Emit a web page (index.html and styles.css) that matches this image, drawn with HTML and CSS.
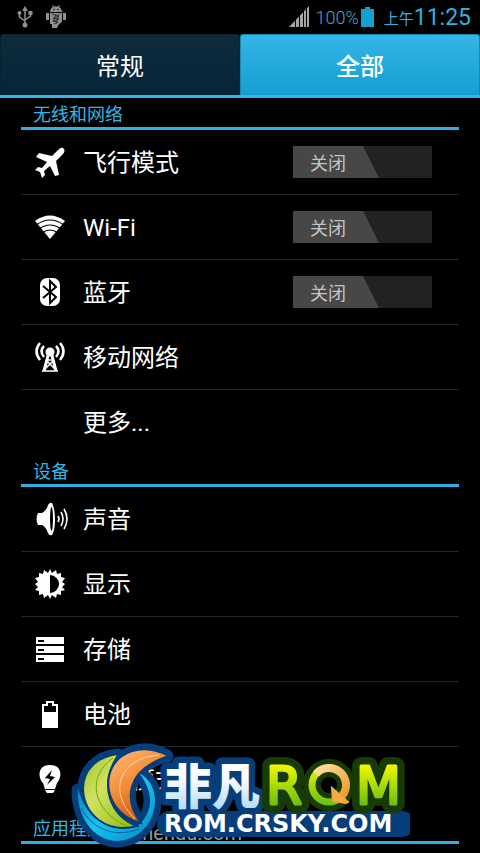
FILE: index.html
```html
<!DOCTYPE html>
<html lang="zh-CN">
<head>
<meta charset="utf-8">
<meta name="viewport" content="width=device-width, initial-scale=1">
<title>设置</title>
<link rel="stylesheet" href="styles.css">
</head>
<body>
<div class="screen">
  <header class="status">
    <div class="status-left">
      <svg class="s-icon" width="16" height="22" viewBox="0 0 16 22" aria-hidden="true"><g fill="none" stroke="#8f8f8f" stroke-width="1.5"><path d="M8 4V18M2.500 7V11L8 15M13.500 7V10L8 14"/></g><g fill="#8f8f8f"><path d="M8 0L11 5H5Z"/><circle cx="8" cy="19" r="2.500"/><circle cx="2.500" cy="7" r="2"/><path d="M11.500 5h4v4h-4z"/></g></svg>
      <svg class="s-icon" width="20" height="24" viewBox="0 0 20 24" aria-hidden="true"><path fill="#8f8f8f" d="M4 7C4 4 6 2.500 7 2L6 0.500L7 0L8 1.500Q10 1 12 1.500L13 0L14 .5L13 2C15 3 16 5 16 7ZM0 8h3v7H0zM17 8h3v7h-3zM4 8h12v9l-3 2-2 4H6v-4H4z"/><g fill="#151515"><circle cx="8" cy="4.500" r=".8"/><circle cx="12" cy="4.500" r=".8"/></g><path d="M6 9l7 2-6 2 6 1-6 2 5 1-4 2M10 9l-3 8M13 9l-3 10" stroke="#303030" fill="none"/></svg>
    </div>
    <div class="status-right">
      <svg width="20" height="22" viewBox="0 0 20 22" aria-hidden="true"><path fill="#a5a5a5" d="M0 21L20 0V21Z"/><path stroke="#000" d="M6.500 0V22M10.500 0V22M14.500 0V22M17.500 0V22" fill="none"/></svg>
      <span class="percent">100%</span>
      <svg class="batt" width="13" height="20" viewBox="0 0 13 20" aria-hidden="true"><path fill="#139fd0" d="M4 0h5v2h4v18H0V2h4z"/></svg>
      <span class="ampm">上午</span><time class="time">11:25</time>
    </div>
  </header>

  <nav class="tabs">
    <button class="tab" type="button">常规</button>
    <button class="tab tab-active" type="button">全部</button>
  </nav>

  <main class="settings">
    <section>
      <h2 class="heading">无线和网络</h2>
      <div class="row">
        <svg class="icon" viewBox="0 0 34 34" aria-hidden="true"><path fill="#fff" d="M30 3Q33 5 30 9L23 16L26 30L22 31L17 21L11 26L12 30L9 33L7 27L2 25L5 22L9 23L14 17L3 12L6 8L19 11L25 5Q28 2 30 3Z"/></svg>
        <label class="name" for="air">飞行模式</label>
        <span class="switch"><input id="air" type="checkbox" role="switch"><span class="thumb">关闭</span></span>
      </div>
      <div class="row">
        <svg class="icon" viewBox="0 0 34 34" aria-hidden="true"><path fill="#fff" d="M2 11Q17 0 32 11L17 29Z"/><path d="M3 15Q17 5 31 15M6 19Q17 11 28 19M9 23Q17 17 25 23" fill="none" stroke="#000" stroke-width="1.200"/></svg>
        <label class="name" for="wifi">Wi-Fi</label>
        <span class="switch"><input id="wifi" type="checkbox" role="switch"><span class="thumb">关闭</span></span>
      </div>
      <div class="row">
        <svg class="icon" viewBox="0 0 34 34" aria-hidden="true"><rect x="7" y="3" width="20" height="28" rx="7" fill="#fff"/><path d="M10 11L23 22L17 28V6L23 12L10 23" fill="none" stroke="#000" stroke-width="2"/></svg>
        <label class="name" for="bt">蓝牙</label>
        <span class="switch"><input id="bt" type="checkbox" role="switch"><span class="thumb">关闭</span></span>
      </div>
      <a class="row" href="#mobile">
        <svg class="icon" viewBox="0 0 34 34" aria-hidden="true"><g fill="none" stroke="#fff" stroke-width="2.500"><path d="M7 3Q0 11 7 20M11 6Q6 11 11 17M27 3Q34 11 27 20M23 6Q28 11 23 17"/><path d="M16 12L11 31M18 12L23 31" stroke-width="3"/><path d="M13 20L22 29M21 20L12 29M13 20H21M9 31H25" stroke-width="1.500"/></g><circle cx="17" cy="12" r="4.500" fill="#fff"/></svg>
        <span class="name">移动网络</span>
      </a>
      <a class="row" href="#more"><span class="icon"></span><span class="name">更多...</span></a>
    </section>

    <section>
      <h2 class="heading">设备</h2>
      <a class="row" href="#sound">
        <svg class="icon" viewBox="0 0 34 34" aria-hidden="true"><path fill="#fff" d="M5 11H9Q14 8 15 3Q17 0 19 1C23 8 23 27 19 33Q16 34 15 31Q13 25 9 23H5Q2 17 5 11Z"/><ellipse cx="18.500" cy="17" rx="1.500" ry="12" fill="#000"/><path d="M25 14Q27 17 25 20M28 10Q32 17 28 24M31 7Q37 17 31 27" fill="none" stroke="#fff" stroke-width="1.600"/></svg>
        <span class="name">声音</span>
      </a>
      <a class="row" href="#display">
        <svg class="icon" viewBox="0 0 34 34" aria-hidden="true"><path fill="#fff" d="M17 2L19 6L23 3L24 7L28 6L28 10L32 11L29 15L32 17L29 20L32 23L28 24L28 28L24 27L23 31L19 28L17 32L15 28L11 31L10 27L6 28L6 24L2 23L5 20L2 17L5 15L2 11L6 10L6 6L10 7L11 3L15 6Z"/><path d="M17 8A9 9 0 0 1 17 26Z"/></svg>
        <span class="name">显示</span>
      </a>
      <a class="row" href="#storage">
        <svg class="icon" viewBox="0 0 34 34" aria-hidden="true"><path fill="#fff" d="M3 5h28v7H3zM3 14h28v7H3zM3 23h28v7H3z"/><path d="M5 8h6v2H5zM5 17h6v2H5zM5 26h6v2H5z"/></svg>
        <span class="name">存储</span>
      </a>
      <a class="row" href="#battery">
        <svg class="icon" viewBox="0 0 34 34" aria-hidden="true"><path fill="#fff" d="M13 4h8v3h4v24H9V7h4z"/><path d="M11 9h4V6h4v3h4v6H11z"/></svg>
        <span class="name">电池</span>
      </a>
      <a class="row" href="#power">
        <svg class="icon" viewBox="0 0 34 34" aria-hidden="true"><path fill="#fff" d="M17 3C30 3 29 16 24 21L22 27H12L10 21C5 16 4 3 17 3ZM12 28H22L20 31H14Z"/><path d="M19 8L12 16L17 17L14 23L22 15L17 14Z"/></svg>
        <span class="name">省电模式</span>
      </a>
    </section>

    <section>
      <h2 class="heading">应用程序</h2>
    </section>
  </main>

  <div class="badge">
    <svg class="logo" viewBox="71 740 340 113" role="img" aria-label="非凡ROM ROM.CRSKY.COM">
      <defs>
        <linearGradient id="lime" gradientUnits="userSpaceOnUse" x1="0" y1="764" x2="0" y2="807"><stop stop-color="#f4f800"/><stop offset="1" stop-color="#62bd13"/></linearGradient>
        <linearGradient id="ice" gradientUnits="userSpaceOnUse" x1="0" y1="762" x2="0" y2="810"><stop offset=".3" stop-color="#fff"/><stop offset="1" stop-color="#b4daf3"/></linearGradient>
        <linearGradient id="orange" x1="0" y1="0" x2=".6" y2="1"><stop stop-color="#ffc083"/><stop offset=".5" stop-color="#f38b35"/><stop offset="1" stop-color="#c94f07"/></linearGradient>
        <linearGradient id="green" x1="0" y1="0" x2="1" y2="1"><stop stop-color="#9cc52c"/><stop offset=".4" stop-color="#d0e25f"/><stop offset="1" stop-color="#8fba08"/></linearGradient>
        <linearGradient id="cyan" x1="0" y1="0" x2="1" y2="1"><stop stop-color="#0074b5"/><stop offset=".5" stop-color="#18c3ed"/><stop offset="1" stop-color="#0087c8"/></linearGradient>
        <linearGradient id="gold" x1="0" y1="0" x2="1" y2="1"><stop stop-color="#ffe1a0"/><stop offset="1" stop-color="#ed9b22"/></linearGradient>
      </defs>
      <text class="site-small" x="133" y="840">shendu.com</text>
      <!-- navy backing -->
      <g fill="#063e7c" stroke="#063e7c" stroke-width="13" stroke-linejoin="round">
        <path d="M79 790C79 820 96 840 117 841C140 841 156 822 156 801C156 788 150 778 140 773C148 783 152 794 151 803C150 813 145 821 138 826C112 832 90 818 79 790Z"/>
        <path d="M119 755C98 757 85 771 85 789C86 813 106 832 136 825C108 815 96 783 119 755Z"/>
        <path d="M168 756C144 743 117 752 111 776C107 798 121 816 139 821C125 800 124 767 168 756Z"/>
      </g>
      <!-- ring and crescents -->
      <path fill="url(#cyan)" d="M79 788C77 819 96 840 117 841C140 841 156 822 156 801C156 788 150 778 140 773C148 783 152 794 151 803C150 813 145 821 138 826C114 834 87 821 79 788Z"/>
      <path fill="none" stroke="#075e9d" stroke-width="1" d="M82 808C94 830 116 838 140 829"/>
      <path fill="url(#green)" stroke="#063e7c" stroke-width="2" d="M120 754C98 756 84 770 84 789C85 815 108 834 138 826C112 817 98 785 120 754Z"/>
      <path fill="none" stroke="#7d9e18" d="M114 758C88 776 92 809 127 826"/>
      <path fill="url(#orange)" stroke="#063e7c" stroke-width="2" d="M170 756C144 742 116 751 110 776C106 799 121 818 142 823C125 800 126 770 170 756Z"/>
      <path fill="none" stroke="#ffd4a4" stroke-width="1" d="M160 755C120 758 108 792 136 819"/>
      <path d="M171 824H403" stroke="#063e7c" stroke-width="26" stroke-linecap="round"/>
      <text class="brand-cn" x="165" y="804">非凡</text>
      <g class="brand-back"><text x="267" y="804">R</text><circle cx="330" cy="785" r="17"/><text x="357" y="804">M</text></g>
      <g class="brand-front"><text x="267" y="804">R</text><text x="357" y="804">M</text></g>
      <circle cx="330" cy="785" r="17" fill="none" stroke="url(#lime)" stroke-width="7"/>
      <path d="M317 774A17 17 0 0 1 343 796" fill="none" stroke="url(#gold)" stroke-width="8"/>
      <path d="M333 788L349 802L347 803L334 801Z" fill="#f5aa3d" stroke="#f5aa3d" stroke-width="2"/>
      <text class="brand-url" x="165" y="832">ROM.CRSKY.COM</text>
    </svg>
  </div>
</div>
</body>
</html>
```
FILE: styles.css
```css
* { box-sizing: border-box; }

body {
  margin: 0;
  background: #000;
  color: #fff;
  font-family: Roboto, "Noto Sans CJK SC", sans-serif;
}

.screen {
  position: relative;
  min-height: 100vh;
  overflow: hidden;
}

.status {
  display: flex;
  justify-content: space-between;
  align-items: center;
  height: 34px;
  padding: 0 9px 0 17px;
}

.status-left, .status-right { display: flex; align-items: center; }
.status-left { gap: 13px; }
.status-right { color: #35b0dc; white-space: nowrap; }
.percent { margin-left: 6px; font-size: 18px; font-weight: 300; color: #4fa5c0; }
.batt { margin: 0 10px 0 2px; }
.ampm { font-size: 15px; line-height: 20px; padding-top: 4px; }
.time { font-size: 23px; }

.tabs {
  display: flex;
  height: 64px;
  border-bottom: 3px solid #33b5e5;
}

.tab {
  flex: 1;
  padding: 4px 0 0;
  border: 1px solid #0a2230;
  border-radius: 3px 3px 0 0;
  background: linear-gradient(#0d2b3b, #062539);
  color: #fff;
  font: 24px/32px Roboto, "Noto Sans CJK SC", sans-serif;
}

.tab-active {
  border-color: #1c86b3;
  border-bottom-color: #169bcc;
  background: linear-gradient(#35b5e5, #149fd2);
  font-weight: 500;
}

.settings { padding: 0 21px; }

.heading {
  height: 32px;
  margin: 0;
  padding-left: 12px;
  border-bottom: 3px solid #33ade0;
  color: #33b5e5;
  font-size: 18px;
  font-weight: 400;
  line-height: 34px;
}

.row {
  display: flex;
  align-items: center;
  height: 65px;
  padding: 0 27px 0 12px;
  border-bottom: 1px solid #262626;
  color: #fff;
  text-decoration: none;
}

.row:last-child { border-bottom-color: transparent; }

.icon {
  flex: none;
  width: 34px;
  height: 34px;
  margin-right: 16px;
  overflow: visible;
}

.name { flex: 1; padding-top: 2px; font-size: 24px; line-height: 32px; }

.switch {
  position: relative;
  width: 139px;
  height: 32px;
  background: #222;
}

.switch input {
  position: absolute;
  inset: 0;
  width: 100%;
  height: 100%;
  margin: 0;
  opacity: 0;
}

.thumb {
  display: block;
  width: 86px;
  height: 32px;
  padding-left: 17px;
  background: #474747;
  clip-path: polygon(0 0, 70px 0, 100% 100%, 0 100%);
  color: #c4c4c4;
  font-size: 18px;
  line-height: 36px;
  pointer-events: none;
}

.badge {
  position: absolute;
  right: 0;
  bottom: 0;
  left: 0;
  display: flex;
  justify-content: center;
  pointer-events: none;
}

.logo { display: block; width: 340px; height: 113px; }

.site-small { font-size: 20px; fill: #999; }

.brand-cn {
  font: 900 48px "Noto Sans CJK SC", sans-serif;
  fill: url(#ice);
  stroke: #063e7c;
  stroke-width: 13px;
  stroke-linejoin: round;
  paint-order: stroke;
}

.brand-back, .brand-front { font: 52px "DejaVu Sans", sans-serif; stroke-linejoin: round; }
.brand-back { fill: #183b05; stroke: #183b05; stroke-width: 18px; }
.brand-back circle { fill: none; }
.brand-front { fill: url(#lime); stroke: url(#lime); stroke-width: 3px; }

.brand-url { font: bold 24px "DejaVu Sans", sans-serif; fill: #fff; }
```
